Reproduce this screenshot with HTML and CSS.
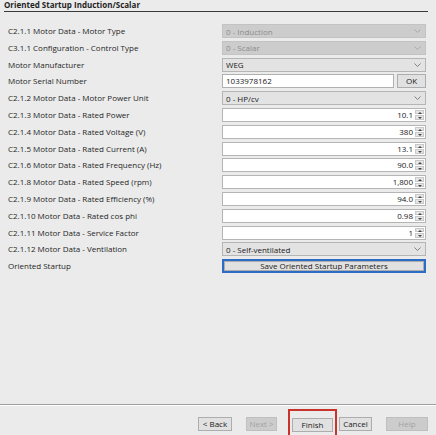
FILE: index.html
```html
<!DOCTYPE html>
<html>
<head>
<meta charset="utf-8">
<link rel="stylesheet" href="styles.css">
</head>
<body>
<div class="page">
  <div class="title">Oriented Startup Induction/Scalar</div>
  <div class="form">
    <div class="label">C2.1.1 Motor Data - Motor Type</div>
    <div class="combo disabled"><span>0 - Induction</span><span class="chev"><svg width="7" height="4" viewBox="0 0 7 4"><path d="M0.5 0.5 L3.5 3.5 L6.5 0.5" fill="none" stroke="currentColor" stroke-width="0.9"/></svg></span></div>

    <div class="label">C3.1.1 Configuration - Control Type</div>
    <div class="combo disabled"><span>0 - Scalar</span><span class="chev"><svg width="7" height="4" viewBox="0 0 7 4"><path d="M0.5 0.5 L3.5 3.5 L6.5 0.5" fill="none" stroke="currentColor" stroke-width="0.9"/></svg></span></div>

    <div class="label">Motor Manufacturer</div>
    <div class="combo"><span>WEG</span><span class="chev"><svg width="7" height="4" viewBox="0 0 7 4"><path d="M0.5 0.5 L3.5 3.5 L6.5 0.5" fill="none" stroke="currentColor" stroke-width="0.9"/></svg></span></div>

    <div class="label">Motor Serial Number</div>
    <div class="serial"><div class="text">1033978162</div><div class="btn ok">OK</div></div>

    <div class="label">C2.1.2 Motor Data - Motor Power Unit</div>
    <div class="combo"><span>0 - HP/cv</span><span class="chev"><svg width="7" height="4" viewBox="0 0 7 4"><path d="M0.5 0.5 L3.5 3.5 L6.5 0.5" fill="none" stroke="currentColor" stroke-width="0.9"/></svg></span></div>

    <div class="label">C2.1.3 Motor Data - Rated Power</div>
    <div class="spin"><div class="val">10.1</div><div class="arrows"><span class="up"></span><span class="down"></span></div></div>

    <div class="label">C2.1.4 Motor Data - Rated Voltage (V)</div>
    <div class="spin"><div class="val">380</div><div class="arrows"><span class="up"></span><span class="down"></span></div></div>

    <div class="label">C2.1.5 Motor Data - Rated Current (A)</div>
    <div class="spin"><div class="val">13.1</div><div class="arrows"><span class="up"></span><span class="down"></span></div></div>

    <div class="label">C2.1.6 Motor Data - Rated Frequency (Hz)</div>
    <div class="spin"><div class="val">90.0</div><div class="arrows"><span class="up"></span><span class="down"></span></div></div>

    <div class="label">C2.1.8 Motor Data - Rated Speed (rpm)</div>
    <div class="spin"><div class="val">1,800</div><div class="arrows"><span class="up"></span><span class="down"></span></div></div>

    <div class="label">C2.1.9 Motor Data - Rated Efficiency (%)</div>
    <div class="spin"><div class="val">94.0</div><div class="arrows"><span class="up"></span><span class="down"></span></div></div>

    <div class="label">C2.1.10 Motor Data - Rated cos phi</div>
    <div class="spin"><div class="val">0.98</div><div class="arrows"><span class="up"></span><span class="down"></span></div></div>

    <div class="label">C2.1.11 Motor Data - Service Factor</div>
    <div class="spin"><div class="val">1</div><div class="arrows"><span class="up"></span><span class="down"></span></div></div>

    <div class="label">C2.1.12 Motor Data - Ventilation</div>
    <div class="combo"><span>0 - Self-ventilated</span><span class="chev"><svg width="7" height="4" viewBox="0 0 7 4"><path d="M0.5 0.5 L3.5 3.5 L6.5 0.5" fill="none" stroke="currentColor" stroke-width="0.9"/></svg></span></div>

    <div class="label">Oriented Startup</div>
    <div class="btn save">Save Oriented Startup Parameters</div>
  </div>

  <div class="footer">
    <div class="buttons">
      <div class="btn nav back">&lt; Back</div>
      <div class="btn nav next disabled">Next &gt;</div>
      <div class="finish-wrap"><div class="btn nav finish">Finish</div></div>
      <div class="btn nav cancel">Cancel</div>
      <div class="btn nav help disabled">Help</div>
    </div>
  </div>
</div>
</body>
</html>
```

FILE: styles.css
```css
html, body {
  margin: 0;
  padding: 0;
  background: #ebebeb;
}
body {
  font-family: "Open Sans", "Noto Sans", sans-serif;
  font-size: 8px;
  color: #222;
}
.page {
  height: 435px;
  display: flex;
  flex-direction: column;
  overflow: hidden;
}
.title {
  font-weight: bold;
  margin: 0 8px 0 4px;
  height: 11px;
  line-height: 10px;
  border-bottom: 1px solid #3a3a3a;
  color: #1f1f1f;
}
.form {
  display: grid;
  grid-template-columns: 214px 204px;
  row-gap: 2.8px;
  padding-left: 8px;
  margin-top: 12px;
  align-items: center;
}
.label {
  height: 14px;
  line-height: 14px;
  white-space: nowrap;
  color: #262626;
}
.combo {
  box-sizing: border-box;
  height: 14px;
  border: 1px solid #b5b5b5;
  background: #e3e3e3;
  display: flex;
  align-items: center;
  justify-content: space-between;
  padding: 0 4px 0 3px;
  color: #1a1a1a;
}
.combo.disabled {
  background: #cccccc;
  border-color: #c3c3c3;
  color: #8c8c8c;
}
.chev {
  display: flex;
  color: #777;
}
.combo.disabled .chev { color: #a5a5a5; }
.serial {
  display: flex;
  gap: 3px;
  height: 14px;
}
.text {
  box-sizing: border-box;
  flex: 1;
  background: #fff;
  border: 1px solid #b0b0b0;
  padding-left: 3px;
  line-height: 12px;
}
.btn {
  box-sizing: border-box;
  background: #e1e1e1;
  border: 1px solid #adadad;
  text-align: center;
  color: #1a1a1a;
}
.ok {
  width: 29px;
  line-height: 12px;
}
.spin {
  box-sizing: border-box;
  height: 14px;
  display: flex;
  background: #fff;
  border: 1px solid #b5b5b5;
}
.val {
  flex: 1;
  text-align: right;
  line-height: 12px;
  padding-right: 2px;
}
.arrows {
  width: 9px;
  display: flex;
  flex-direction: column;
  gap: 1px;
  padding: 1px 1px 1px 0;
}
.arrows span {
  flex: 1;
  background: #e6e6e6;
  border: 1px solid #c8c8c8;
  position: relative;
}
.arrows span::after {
  content: "";
  position: absolute;
  left: 2px;
  width: 0;
  height: 0;
  border-left: 2px solid transparent;
  border-right: 2px solid transparent;
}
.arrows .up::after {
  top: 1px;
  border-bottom: 2px solid #444;
}
.arrows .down::after {
  top: 1px;
  border-top: 2px solid #444;
}
.save {
  height: 14px;
  line-height: 10px;
  border: 2px solid #2b6cc4;
  outline: 1px solid #adadad;
  outline-offset: -3px;
}
.footer {
  margin-top: auto;
  border-top: 1px solid #a0a0a0;
  box-shadow: inset 0 1px 0 #fff;
  height: 31px;
  padding-top: 12px;
  box-sizing: border-box;
}
.buttons {
  display: flex;
  align-items: flex-start;
  padding-left: 198px;
}
.nav {
  height: 14px;
  line-height: 12px;
}
.back { width: 34px; }
.next { width: 31px; margin-left: 14px; }
.finish { width: 41px; }
.cancel { width: 33px; margin-left: 2px; }
.help { width: 42px; margin-left: 14px; }
.nav.disabled {
  background: #cccccc;
  border-color: #bfbfbf;
  color: #a3a3a3;
}
.finish-wrap {
  margin-left: 11px;
  margin-top: -8px;
  padding: 7px 2px 12px 2px;
  border: 2px solid #c8332b;
  border-bottom: none;
}
```
